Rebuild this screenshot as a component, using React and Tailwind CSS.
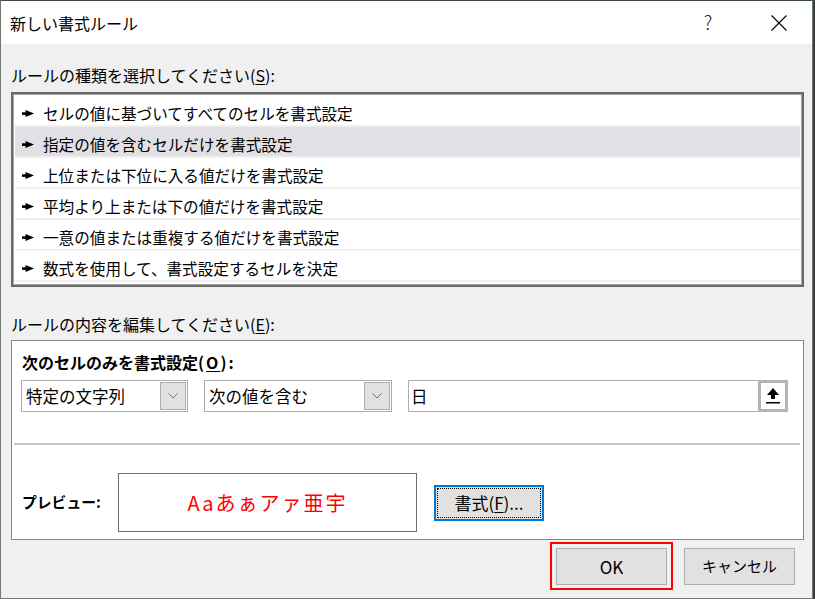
import React from "react";

const rows = [
  "セルの値に基づいてすべてのセルを書式設定",
  "指定の値を含むセルだけを書式設定",
  "上位または下位に入る値だけを書式設定",
  "平均より上または下の値だけを書式設定",
  "一意の値または重複する値だけを書式設定",
  "数式を使用して、書式設定するセルを決定",
];

function Pointer() {
  return (
    <svg width="12" height="7" viewBox="0 0 12 7" className="shrink-0">
      <path d="M0 2.3h5v2.6H0z" fill="#000" />
      <path d="M3.5 0l8.5 3.5L3.5 7z" fill="#000" />
    </svg>
  );
}

function Chevron() {
  return (
    <svg width="10" height="6" viewBox="0 0 10 6">
      <path d="M0.5 0.5L5 5L9.5 0.5" fill="none" stroke="#707070" strokeWidth="1" />
    </svg>
  );
}

function Select({ w, text }) {
  return (
    <div className={`flex h-[32px] border border-[#adadad] bg-white p-px ${w}`}>
      <div className="flex flex-1 items-center pl-[3px] text-[16.5px] text-black">{text}</div>
      <div className="flex w-[26px] items-center justify-center border border-[#adadad] bg-[#e1e1e1]">
        <Chevron />
      </div>
    </div>
  );
}

export default function App() {
  return (
    <div className="h-[599px] w-[815px] bg-[#33413b] font-['Noto_Sans_CJK_JP',sans-serif] text-black">
      <div className="flex h-[599px] w-[813px] flex-col border-x border-b border-t border-[#767676] border-t-[#3a4a43] bg-[#f0f0f0]">
        {/* Title bar */}
        <div className="flex h-[43px] items-center bg-white pl-[9px]">
          <div className="flex-1 text-[16px]">新しい書式ルール</div>
          <div className="mr-[28px] w-[20px] text-center text-[19px] font-light text-[#222]">?</div>
          <div className="flex w-[66px] justify-center">
            <svg width="16" height="16" viewBox="0 0 16 16">
              <path d="M0.5 0.5L15.5 15.5M15.5 0.5L0.5 15.5" stroke="#000" strokeWidth="1.1" />
            </svg>
          </div>
        </div>

        <div className="pl-[10px]">
          <div className="mt-[21px] h-[20px] text-[16px] leading-[20px]">
            ルールの種類を選択してください(<span className="underline underline-offset-2">S</span>):
          </div>

          {/* list */}
          <div className="mt-[7px] h-[195px] w-[793px] border-2 border-[#6a6a6a] bg-white">
            <div className="h-full w-full border border-[#a6a6a6] px-px pt-px">
              {rows.map((r, i) => (
                <div key={i} className="h-[31px] border-b-2 border-[#f0f0f0]">
                  <div
                    className={`flex h-[29px] items-center gap-[9px] pl-[7px] pt-[6px] text-[15.6px] leading-none ${
                      i === 1 ? "bg-[#e0e0e5]" : ""
                    }`}
                  >
                    <Pointer />
                    <span>{r}</span>
                  </div>
                </div>
              ))}
            </div>
          </div>

          <div className="mt-[27px] h-[20px] text-[16px] leading-[20px]">
            ルールの内容を編集してください(<span className="underline underline-offset-2">E</span>):
          </div>

          {/* edit panel */}
          <div className="mt-[6px] h-[200px] w-[793px] border border-[#828790] bg-white">
            <div className="ml-[10px] mt-[11px] h-[20px] text-[16px] font-bold leading-[20px]">
              次のセルのみを書式設定<span className="tracking-[2px]">(<span className="underline underline-offset-2">O</span>):</span>
            </div>
            <div className="mt-[8px] flex gap-[16px] pl-[9px]">
              <Select w="w-[167px]" text="特定の文字列" />
              <Select w="w-[188px]" text="次の値を含む" />
              <div className="flex h-[32px] w-[380px] border border-[#adadad] bg-white">
                <div className="flex flex-1 items-center pl-[2px] text-[16.5px]">日</div>
                <div className="flex h-[32px] w-[30px] -mt-px -mr-px items-center justify-center border-[3px] border-[#b4b4b4] bg-white">
                  <svg width="14" height="16" viewBox="0 0 14 16">
                    <path d="M7 0L13 7H9V11H5V7H1Z" fill="#000" />
                    <rect x="0" y="14" width="14" height="1.5" fill="#000" />
                  </svg>
                </div>
              </div>
            </div>
            <div className="ml-[2px] mr-[3px] mt-[31px] h-[2px] bg-[#c8c8c8]" />
            <div className="mt-[28px] flex items-center pl-[10px]">
              <div className="w-[96px] text-[14.8px] font-bold">プレビュー:</div>
              <div className="flex h-[59px] w-[299px] items-center justify-center border border-[#6d6d6d] text-[20px] tracking-[2px] text-[#ff0000]">
                Aaあぁアァ亜宇
              </div>
              <div className="ml-[17px] flex h-[36px] w-[110px] items-stretch border-2 border-[#0078d7] bg-[#e1e1e1] p-px">
                <div className="flex flex-1 items-center justify-center border border-dotted border-black text-[17px]">
                  書式(<span className="underline underline-offset-2">F</span>)...
                </div>
              </div>
            </div>
          </div>
        </div>

        {/* buttons */}
        <div className="mt-[2px] flex items-start justify-end pr-[17px]">
          <div className="border-2 border-[#ff0000] px-[4px] pb-[3px] pt-[4px]">
            <div className="flex h-[37px] w-[111px] items-center justify-center border border-[#adadad] bg-[#e1e1e1] text-[17px]">
              OK
            </div>
          </div>
          <div className="ml-[11px] mt-[6px] flex h-[37px] w-[111px] items-center justify-center border border-[#adadad] bg-[#e1e1e1] text-[15px]">
            キャンセル
          </div>
        </div>
      </div>
    </div>
  );
}
